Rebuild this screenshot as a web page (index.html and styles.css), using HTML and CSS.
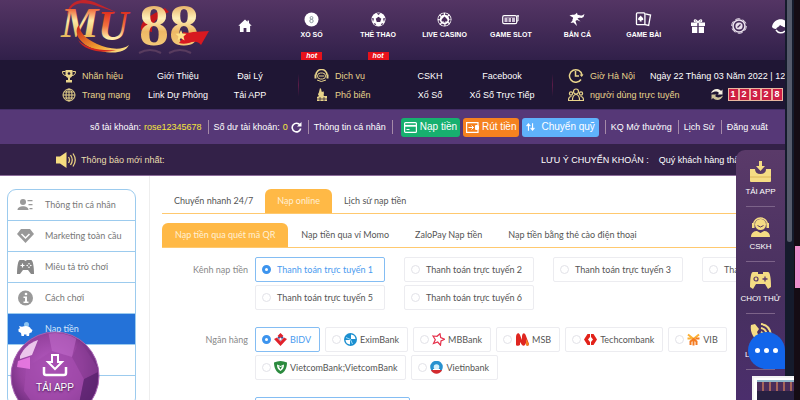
FILE: index.html
```html
<!DOCTYPE html>
<html lang="vi">
<head>
  <meta charset="UTF-8" />
  <meta name="viewport" content="width=device-width, initial-scale=1" />
  <title>MU88 - Nạp tiền</title>
  <link rel="stylesheet" href="styles.css">
</head>
<body>
  <div class="window">
    <div class="page">

      <header class="header">
        <a href="#" class="logo" aria-label="MU 88">
          <svg width="212" height="60" viewBox="0 0 212 60">
            <defs>
              <linearGradient id="goldM" x1="0" y1="0" x2="0" y2="1">
                <stop offset=".2" stop-color="#ef6a3c" />
                <stop offset=".45" stop-color="#fde9a4" />
                <stop offset=".8" stop-color="#e9b95c" />
              </linearGradient>
              <linearGradient id="goldU" x1="0" y1="0" x2="0" y2="1">
                <stop offset=".2" stop-color="#e0301f" />
                <stop offset=".5" stop-color="#f2733e" />
                <stop offset=".75" stop-color="#fdeaa6" />
              </linearGradient>
              <linearGradient id="gold88" x1="0" y1="0" x2="0" y2="1">
                <stop offset=".15" stop-color="#e0a050" />
                <stop offset=".4" stop-color="#fff0b8" />
                <stop offset=".6" stop-color="#eeb865" />
                <stop offset="1" stop-color="#f9d98a" />
              </linearGradient>
              <linearGradient id="swoosh" x1="0" y1="0" x2="1" y2="1">
                <stop offset="0" stop-color="#c81a1a" />
                <stop offset=".6" stop-color="#f0a030" />
                <stop offset="1" stop-color="#fff0a0" />
              </linearGradient>
            </defs>
            <path d="M67 15C68 1 82-3 94 2l24 11c-18-6-34-13-43-8-4 2-6 6-8 10z" fill="#c3242a" />
            <path d="M141 30c-1-11 11-15 24-22l4 4c-12 5-18 11-17 20z" fill="#c4151b" />
            <text x="61" y="37" class="logo-mu" fill="url(#goldM)">M</text>
            <text x="98" y="40" class="logo-mu" fill="url(#goldU)">U</text>
            <path d="M77 34c-1-4 0-7 2-9 1 8 7 14 18 19 12 5 24 7 32 1-4 8-16 9-28 6-13-3-22-9-24-17z" fill="url(#swoosh)" />
            <path d="M78 40c8 8 20 11 38 10-13 4-32 1-38-10z" fill="#d3271f" />
            <text x="139" y="45" class="logo-88" fill="url(#gold88)">88</text>
            <path d="M183 32c4 1 7 1 10 0l16-1-8 14c-3-4-7-4-12-2-4 1-7 1-10 0 3-3 5-7 4-11z" fill="#d71920" />
            <path d="M181 30l1.500 3.500 4 .3-3 2.600 1 4-3.500-2.200-3.500 2.200 1-4-3-2.600 4-.3z" fill="#ffe28a" />
            <path d="M139 53q11-6 22 0M169 53q11-6 22 0" fill="none" stroke="#7b5570" stroke-width="2" opacity=".5" />
          </svg>
        </a>

        <nav class="nav">
          <a href="#" class="nav-item home" aria-label="Trang chủ">
            <svg width="14" height="14" viewBox="0 0 14 14"><path d="M7 .5L.3 6.700h1.600V13h3.700V9h2.800v4h3.700V6.700h1.600L11 4V1.500H9.500v1.200z" fill="#fff" /></svg>
          </a>
          <a href="#" class="nav-item">
            <svg width="15" height="15" viewBox="0 0 15 15"><circle cx="7.500" cy="7.500" r="7" fill="#fff" /><g fill="none" stroke="#8d9aa0"><circle cx="7.500" cy="5.900" r="1.400" /><circle cx="7.500" cy="9" r="1.700" /></g></svg>
            XỔ SỐ
            <span class="hot">hot</span>
          </a>
          <a href="#" class="nav-item">
            <svg width="15" height="15" viewBox="0 0 15 15"><circle cx="7.500" cy="7.500" r="7" fill="#fff" /><g fill="#4a2d5a"><path d="M7.500 4.700l2.800 2-1.100 3.200H5.800L4.700 6.700z" /><path d="M5.500 1.300h4L7.500 3zM1 6l2 .5-1 3.500zM14 6l-2 .5 1 3.500zM4 11l1.500 2.500-3-1.500zM11 11l-1.500 2.500 3-1.500z" /></g></svg>
            THỂ THAO
            <span class="hot">hot</span>
          </a>
          <a href="#" class="nav-item">
            <svg width="15" height="15" viewBox="0 0 15 15"><circle cx="7.500" cy="7.500" r="7" fill="#fff" /><circle cx="7.500" cy="7.500" r="5.500" fill="none" stroke="#4a2d5a" stroke-width="1.500" stroke-dasharray="3 1.300" /><path d="M7.500 4.500c2 2 3 2.500 3 4 0 1.200-1.700 1.300-2.300.5l.3 1.500h-2l.3-1.500c-.6.8-2.300.7-2.300-.5 0-1.500 1-2 3-4z" fill="#4a2d5a" /></svg>
            LIVE CASINO
          </a>
          <a href="#" class="nav-item">
            <svg width="17" height="15" viewBox="0 0 17 15"><rect x=".7" y="3.700" width="14" height="8" rx="1.500" fill="none" stroke="#fff" stroke-width="1.200" /><rect x="2.500" y="5.500" width="10.500" height="4.500" fill="#cfc3d6" /><path d="M6 6v4M9.500 6v4" stroke="#4a2d5a" /><path d="M15 9h1V5" stroke="#fff" fill="none" /><circle cx="16" cy="4" r="1" fill="#fff" /></svg>
            GAME SLOT
          </a>
          <a href="#" class="nav-item">
            <svg width="16" height="15" viewBox="0 0 16 15"><path d="M.5 3.500C3 2.500 4 3 6 2.500L8 .7l.5 2c2 .2 3 1 4.500.8L15.500 2l-1 3-2 1c-2-.5-3-.5-4 .5l3 3-3.500-1.500-1.500 1 1.500 5-3.500-3.500-3 .5 2-2.500C3 7 4.500 6.700 4 5.500z" fill="#fff" /></svg>
            BẮN CÁ
          </a>
          <a href="#" class="nav-item">
            <svg width="17" height="15" viewBox="0 0 17 16"><path d="M10.500 2l5.500 1.300-2 11-5-1" fill="none" stroke="#fff" stroke-width="1.400" /><rect x="1" y="1" width="9" height="12.500" rx="1" fill="none" stroke="#fff" stroke-width="1.400" /><path d="M5.500 3.800c1.500 2 2.800 2.500 2.800 4 0 1-1.300 1.300-2 .6l.3 1.600H4.400l.3-1.600c-.7.700-2 .4-2-.6 0-1.500 1.300-2 2.800-4z" fill="#fff" /></svg>
            GAME BÀI
          </a>
        </nav>

        <div class="header-tools">
          <a href="#" aria-label="Khuyến mãi">
            <svg width="14" height="14" viewBox="0 0 14 14"><g fill="#fff"><path d="M0 3.500h6.300v3.500H0zM7.700 3.500H14v3.500H7.700zM1 7.700h5.300V14H1zM7.700 7.700H13V14H7.700z" /></g><path d="M7 3.300C5-.5 2.500.8 3.500 2.500L7 3.300l3.500-.8C11.500.8 9-.5 7 3.300z" fill="none" stroke="#fff" stroke-width="1.200" /></svg>
          </a>
          <a href="#" aria-label="VIP">
            <svg width="16" height="16" viewBox="0 0 16 16"><circle cx="8" cy="8" r="6" fill="none" stroke="#e9e0ec" stroke-width="1.600" /><circle cx="8" cy="8" r="7.300" fill="none" stroke="#e9e0ec" stroke-dasharray="5 2.600" /><circle cx="8" cy="8" r="3.600" fill="#e9e0ec" /><path d="M6.500 9.500l3-3" stroke="#4a2d5a" stroke-width="1.200" /></svg>
          </a>
          <a href="#" aria-label="Hỗ trợ">
            <svg width="16" height="16" viewBox="0 0 16 16"><path d="M0 8.500C2 0 12-1 15 5v4c-3 1-5-1-7-2-1 2-3 2-4 4-2 0-4-1-4-2.500z" fill="#fff" /><path d="M4 12c2 3 6 4 9 1" stroke="#fff" stroke-width="1.500" fill="none" /></svg>
          </a>
        </div>
      </header>

      <!-- Menu phụ -->
      <section class="submenu">
        <div class="group">
          <span class="gold">
            <svg width="14" height="14" viewBox="0 0 14 14"><path d="M3.500 1h7v4c0 2.500-1.500 4-3.500 4S3.500 7.500 3.500 5z" fill="#e8d48b" /><path d="M3.500 2.500h-3c0 2.500 1 4 3.700 4M10.500 2.500h3c0 2.500-1 4-3.700 4" fill="none" stroke="#e8d48b" /><path d="M6 8.500h2V11h2v2.500H4V11h2z" fill="#e8d48b" /><circle cx="7" cy="4.500" r="1.300" fill="#1f1634" /></svg>
            Nhãn hiệu
          </span>
          <a href="#">Giới Thiệu</a>
          <a href="#">Đại Lý</a>
          <span class="gold">
            <svg width="14" height="14" viewBox="0 0 14 14" fill="none" stroke="#e8d48b"><circle cx="7" cy="7" r="6" /><ellipse cx="7" cy="7" rx="3" ry="6" /><path d="M7 1v12M1 7h12M2 4h10M2 10h10" /></svg>
            Trang mạng
          </span>
          <a href="#">Link Dự Phòng</a>
          <a href="#">Tải APP</a>
        </div>
        <div class="group">
          <span class="gold">
            <svg width="15" height="14" viewBox="0 0 15 14" fill="none" stroke="#e8d48b"><path d="M2 6a5.500 5.500 0 0 1 11 0" stroke-width="1.500" /><rect x="3.500" y="4" width="8" height="6" rx="3" /><path d="M1.500 5.500v4M13.500 5.500v4" stroke-width="2" /><path d="M5 7h5M3 11q4 3 9 0" /></svg>
            Dịch vụ
          </span>
          <a href="#">CSKH</a>
          <a href="#">Facebook</a>
          <span class="gold">
            <svg width="15" height="14" viewBox="0 0 15 14"><path d="M6 0c2 1 1 3 2 4 1 0 1-1 1-1 2 2 0 4 1 5h3v5H3V9l2-1C3 6 5 5 5 4z" fill="#e8d48b" /><path d="M2 11h11M6 9v4M10 9v4" stroke="#1f1634" stroke-width=".7" /></svg>
            Phổ biến
          </span>
          <a href="#">Xổ Số</a>
          <a href="#">Xổ Số Trực Tiếp</a>
        </div>
        <div class="clock">
          <div class="clock-row">
            <span class="gold">
              <svg width="16" height="15" viewBox="0 0 16 15" fill="none" stroke="#e8d48b" stroke-width="1.500"><path d="M13 11.500A6.300 6.300 0 1 1 14 7" /><path d="M7.500 3v5h3.500" /><path d="M11.500 6.500h4L13.700 9z" fill="#e8d48b" stroke="none" /></svg>
              Giờ Hà Nội
            </span>
            <time>Ngày 22 Tháng 03 Năm 2022 | 12:</time>
          </div>
          <div class="clock-row">
            <span class="gold">
              <svg width="16" height="14" viewBox="0 0 16 14" fill="none" stroke="#e8d48b" stroke-width="1.200"><circle cx="8" cy="3.500" r="2.500" /><path d="M4.500 12.500c-.5-8 7.500-8 7 0z" /><circle cx="3" cy="5.500" r="1.600" /><circle cx="13" cy="5.500" r="1.600" /><path d="M4.500 12.500h-4c0-3 1-4 3-4M11.500 12.500h4c0-3-1-4-3-4" /></svg>
              người dùng trực tuyến
            </span>
            <span class="counter">
              <svg width="14" height="13" viewBox="0 0 14 13"><path d="M1 5.500C2 1 8-.5 11 3l1.500-1.500v5h-5L9 5C7 3 4.500 3 1 5.500z" fill="#f5f0e0" /><path d="M13 7.500c-1 4.500-7 6-10 2.500L1.500 11.500v-5h5L5 8c2 2 4.500 2 8-.5z" fill="#cfc49a" /></svg>
              <b>1</b><b>2</b><b>3</b><b>2</b><b>8</b>
            </span>
          </div>
        </div>
      </section>

      <!-- Thanh tài khoản -->
      <section class="account">
        <span>số tài khoản: <em>rose12345678</em></span>
        <span>Số dư tài khoản: <em>0</em>
          <svg class="reload" width="11" height="11" viewBox="0 0 11 11"><path d="M9 3A4.300 4.300 0 1 0 9.700 6.500" fill="none" stroke="#fff" stroke-width="1.600" /><path d="M10.500 0v4.500H6z" fill="#fff" /></svg>
        </span>
        <a href="#">Thông tin cá nhân</a>
        <div class="buttons">
          <button type="button" class="deposit">
            <svg width="13" height="11" viewBox="0 0 13 11"><rect x=".6" y=".6" width="11.800" height="9.800" rx="1" fill="none" stroke="#fff" stroke-width="1.200" /><path d="M0 3.800h13" stroke="#fff" stroke-width="1.800" /><path d="M2.500 7.500h3" stroke="#fff" /></svg>
            Nạp tiền
          </button>
          <button type="button" class="withdraw">
            <svg width="13" height="11" viewBox="0 0 13 11"><path d="M12 3V.6H.6v9.800H12V8" fill="none" stroke="#fff" stroke-width="1.200" /><rect x="9" y="3" width="4" height="5" rx="1" fill="#fff" /><path d="M2.500 5.500h5M5.500 3.500l2 2-2 2" fill="none" stroke="#fff" /></svg>
            Rút tiền
          </button>
          <button type="button" class="transfer">
            <svg width="9" height="10" viewBox="0 0 11 10"><path d="M3 9.500V2M.7 4L3 1.200 5.300 4M8 .5V8M5.700 6L8 8.800 10.300 6" fill="none" stroke="#fff" stroke-width="1.400" /></svg>
            Chuyển quỹ
          </button>
        </div>
        <a href="#">KQ Mở thưởng</a>
        <a href="#">Lịch Sử</a>
        <a href="#">Đăng xuất</a>
      </section>

      <section class="notice">
        <svg width="21" height="16" viewBox="0 0 21 16"><path d="M0 4.500h4L10.500 0v16L4 11.500H0z" fill="#f6dc80" /><path d="M12.500 5q2 3 0 6M14.500 3q3.500 5 0 10M17 1.500q4.500 6.500 0 13" fill="none" stroke="#e8cf80" stroke-width="1.300" /></svg>
        <strong>Thông báo mới nhất:</strong>
        <p class="marquee"><span>LƯU Ý CHUYỂN KHOẢN :</span><span>Quý khách hàng thân mến</span></p>
      </section>

      <div class="body">
        <aside class="sidebar">
          <ul class="menu">
            <li><a href="#">
              <svg width="16" height="16" viewBox="0 0 16 16" fill="#999"><circle cx="5.500" cy="5" r="3" /><path d="M0 13c0-5 11-5 11 0z" /><path d="M10 3h5v1.200h-5zM11 7h4v1.200h-4zM12 11h3v1.200h-3z" /></svg>
              Thông tin cá nhân</a></li>
            <li><a href="#">
              <svg width="17" height="16" viewBox="0 0 17 16"><path d="M4 1h9l4 5-8.500 9L0 6z" fill="#999" /><path d="M4.500 6l4 4 4-4" fill="none" stroke="#fff" stroke-width="1.500" /></svg>
              Marketing toàn cầu</a></li>
            <li><a href="#">
              <svg width="17" height="16" viewBox="0 0 17 16"><path d="M3 1h4l1.500 1L10 1h4c2 0 3 7 3 14h-3l-3-4H6l-3 4H0C0 8 1 1 3 1z" fill="#888" /><path d="M3.500 6.500h4M5.500 4.500v4" stroke="#fff" stroke-width="1.200" /><g fill="#fff"><circle cx="12" cy="4.700" r=".8" /><circle cx="12" cy="8.300" r=".8" /><circle cx="10.200" cy="6.500" r=".8" /><circle cx="13.800" cy="6.500" r=".8" /></g></svg>
              Miêu tả trò chơi</a></li>
            <li><a href="#">
              <svg width="16" height="16" viewBox="0 0 16 16"><circle cx="8" cy="8" r="7.500" fill="#999" /><g fill="#fff"><circle cx="8.500" cy="4" r="1.300" /><path d="M6 6.500h3.500v5H11V13H6v-1.500h1.500V8H6z" /></g></svg>
              Cách chơi</a></li>
            <li><a href="#" class="active">
              <svg width="16" height="16" viewBox="0 0 16 16"><circle cx="9" cy="3.500" r="2.500" fill="#8ec5f2" /><path d="M1.500 5l3 .8C8 4 12.500 5 13.500 8l1.500 1-1 2.500-2 .5-.5 3H9v-1.500H6.500V15H4l-.5-3L1 10.500V8l1.500-.7z" fill="#fff" /></svg>
              Nạp tiền</a></li>
            <li><a href="#" aria-label="Rút tiền"></a></li>
            <li><a href="#" aria-label="Lịch sử"></a></li>
          </ul>
        </aside>

        <main class="content">
          <nav class="tabs">
            <a href="#">Chuyển nhanh 24/7</a>
            <a href="#" class="active">Nạp online</a>
            <a href="#">Lịch sử nạp tiền</a>
          </nav>
          <nav class="tabs methods">
            <a href="#" class="active">Nạp tiền qua quét mã QR</a>
            <a href="#">Nạp tiền qua ví Momo</a>
            <a href="#">ZaloPay Nạp tiền</a>
            <a href="#">Nạp tiền bằng thẻ cào điện thoại</a>
          </nav>

          <form>
            <div class="field" role="radiogroup" aria-labelledby="channelLabel">
              <span class="field-label" id="channelLabel">Kênh nạp tiền</span>
              <div class="channels">
                <label class="option"><input type="radio" name="channel" checked>Thanh toán trực tuyến 1</label>
                <label class="option"><input type="radio" name="channel">Thanh toán trực tuyến 2</label>
                <label class="option"><input type="radio" name="channel">Thanh toán trực tuyến 3</label>
                <label class="option"><input type="radio" name="channel">Thanh toán trực tuyến 4</label>
                <label class="option"><input type="radio" name="channel">Thanh toán trực tuyến 5</label>
                <label class="option"><input type="radio" name="channel">Thanh toán trực tuyến 6</label>
              </div>
            </div>

            <div class="field" role="radiogroup" aria-labelledby="bankLabel">
              <span class="field-label" id="bankLabel">Ngân hàng</span>
              <div class="banks">
                <label class="option"><input type="radio" name="bank" checked>
                  <svg width="13" height="13" viewBox="0 0 13 13"><path d="M6.500 1l3 3.500-3 3.500-3-3.500z" fill="#35569f" /><path d="M6.500 0l3 3-3 2-3-2zM0 6l3-1.500 3.500 4L10 4.500 13 6 6.500 13z" fill="#e0222b" /><path d="M6.500 4.500l1.500 1.500-1.500 1.500L5 6z" fill="#fff" /></svg>
                  BIDV</label>
                <label class="option"><input type="radio" name="bank">
                  <svg width="13" height="13" viewBox="0 0 13 13"><circle cx="6.500" cy="6.500" r="6.500" fill="#1b8fd0" /><path d="M7 6V1.500A5 5 0 0 1 11.500 6zM6 7v4.500A5 5 0 0 1 1.500 7z" fill="#fff" /><path d="M2 4.500L6.500 6.500l2 4.500" stroke="#9fdcf7" fill="none" /></svg>
                  EximBank</label>
                <label class="option"><input type="radio" name="bank">
                  <svg width="13" height="13" viewBox="0 0 13 13"><path d="M1 3l4 .3L8 .7l.7 3.800 3.800 1.800-3.500 1.600-.5 4.300L5.700 9 1.500 10.500 3.300 6.700z" fill="none" stroke="#e5304a" stroke-width="1.200" /></svg>
                  MBBank</label>
                <label class="option"><input type="radio" name="bank">
                  <svg width="14" height="13" viewBox="0 0 14 13"><path d="M1 4c0-4 3-5 4-2l2 5V3c1-4 3-3 4 0l3 8c0 2-2 2-3 1l-1-2v2c-1 1-2 1-3 0L5 9v3c-1 1-4 1-4 0z" fill="#df2620" /><path d="M11 6l3 5c0 2-2 2-3 1z" fill="#f58220" /></svg>
                  MSB</label>
                <label class="option"><input type="radio" name="bank">
                  <svg width="13" height="13" viewBox="0 0 13 13"><path d="M3.500 1H6v3L4 6.500 6 9v3H3.500L0 6.500zM9.500 1H7v3l2 2.500L7 9v3h2.500L13 6.500z" fill="#e2231a" /></svg>
                  Techcombank</label>
                <label class="option"><input type="radio" name="bank">
                  <svg width="13" height="13" viewBox="0 0 13 13" fill="none" stroke-width="2"><path d="M1 1.500L6.500 6 12 1.500M.5 5.500h4" stroke="#fbb034" /><path d="M8.500 5.500h4M6.500 6v6.500M3.500 12V8.500L6.500 6l3 2.500V12" stroke="#f47b20" /></svg>
                  VIB</label>
                <label class="option"><input type="radio" name="bank">
                  <svg width="13" height="13" viewBox="0 0 13 13"><path d="M0 1.500q6.500-3 13 0C13 7 11 11 6.500 13 2 11 0 7 0 1.500z" fill="#2b8a3e" /><path d="M3 3.500l3.500 1.500L10 3.500C10 7 9 8.500 6.500 10 4 8.500 3 7 3 3.500z" fill="#fff" /><path d="M4.500 5L6.500 6l2-1-2 3.500z" fill="#2b8a3e" /></svg>
                  VietcomBank;VietcomBank</label>
                <label class="option"><input type="radio" name="bank">
                  <svg width="13" height="13" viewBox="0 0 13 13"><path d="M2 10.500A6.300 6.300 0 1 1 11 10.500L9 8H4z" fill="#2791cf" /><circle cx="6.500" cy="6" r="2.800" fill="#d5f0fb" /><path d="M1 9h11c-2 5-9 5-11 0z" fill="#d32b2f" /><path d="M3 8.500h7" stroke="#fff" /></svg>
                  Vietinbank</label>
              </div>
            </div>

            <div class="field">
              <span class="field-label"></span>
              <input type="text" class="amount" aria-label="Số tiền nạp">
            </div>
          </form>
        </main>
      </div>

      <!-- Cột hỗ trợ nổi bên phải -->
      <aside class="dock">
        <a href="#">
          <svg width="21" height="21" viewBox="0 0 21 21"><path d="M0 8h5q0 5 5.500 5T16 8h5v12q0 1-1 1H1q-1 0-1-1z" fill="#f5dc84" /><path d="M9 0h3v5h3l-4.500 5L6 5h3z" fill="#f5dc84" /><path d="M0 16h21" stroke="#dcb65a" /></svg>
          TẢI APP</a>
        <a href="#">
          <svg width="21" height="21" viewBox="0 0 21 21"><circle cx="10.500" cy="8.500" r="5.500" fill="#f5dc84" /><path d="M3.500 9a7 7 0 0 1 14 0" fill="none" stroke="#f5dc84" stroke-width="1.500" /><path d="M2 7h2.500v5H2zM16.500 7H19v5h-2.500zM1 21c0-5 4-6 6-6l3.500 2 3.500-2c2 0 6 1 6 6z" fill="#f5dc84" /><path d="M7.500 9.500q3 3 6 0" stroke="#5b3a69" fill="none" /></svg>
          CSKH</a>
        <a href="#">
          <svg width="21" height="18" viewBox="0 0 21 18"><path d="M3 1h5v2h5V1h5c2 0 3 6 3 15l-3 2-3-5H6l-3 5-3-2C0 7 1 1 3 1z" fill="#f5dc84" /><circle cx="6" cy="8" r="2" fill="none" stroke="#5b3a69" stroke-width="1.200" /><path d="M12.500 8h5M15 5.500v5" stroke="#5b3a69" stroke-width="1.300" /></svg>
          CHƠI THỬ</a>
        <a href="#">
          <svg width="22" height="22" viewBox="0 0 22 22"><path d="M1 2l4-1 4 5-2 3c1 3 3 6 6 7l3-2 5 4-3 4C9 22-1 13 1 2z" fill="#f5dc84" /><path d="M11 1q9 1 10 11M11 5q5 1 6 7M11 9q2 1 2 3" fill="none" stroke="#f5dc84" stroke-width="2" /></svg>
          LIÊN HỆ</a>
      </aside>

      <a href="#" class="ball">
        <svg class="ball-bg" viewBox="0 0 90 90">
          <defs>
            <radialGradient id="orb" cx=".45" cy=".4" r=".6">
              <stop offset="0" stop-color="#b85cc4" />
              <stop offset=".6" stop-color="#96429f" />
              <stop offset="1" stop-color="#5f2470" />
            </radialGradient>
            <clipPath id="orbClip"><circle cx="45" cy="45" r="43" /></clipPath>
          </defs>
          <circle cx="45" cy="45" r="44" fill="url(#orb)" stroke="#a864b4" />
          <g clip-path="url(#orbClip)">
            <path d="M16 37L42 20l20 6 12 22-6 30-40 2L14 60z" fill="#a24bac" opacity=".7" />
            <path d="M42 20L38 0h30l-6 26z" fill="#c06aca" opacity=".6" />
            <path d="M74 48l16-8v40l-22-2z" fill="#5c2470" opacity=".8" />
            <path d="M62 26l8-16 20 30-16 8z" fill="#8a3d96" opacity=".6" />
            <path d="M10 25C14 17 19 12 28 9l-6 15-12 4z" fill="#f9dcf8" opacity=".85" />
            <path d="M8 30l12-4v12L7 36z" fill="#f07ee8" opacity=".85" />
          </g>
        </svg>
        <svg class="ball-icon" width="26" height="24" viewBox="0 0 26 24"><path d="M10 2h6v7h4l-7 7-7-7h4z" fill="none" stroke="#fff" stroke-width="2" /><path d="M2 14v6q0 2 2 2h18q2 0 2-2v-6" fill="none" stroke="#fff" stroke-width="2.500" /></svg>
        <span>TẢI APP</span>
      </a>

      <button type="button" class="chat" aria-label="Chat"><i></i><i></i><i></i></button>
    </div>

    <div class="scrollbar"><div class="thumb"></div></div>
    <div class="edge"><div class="edge-tab"></div></div>

    <div class="preview">
      <div class="preview-top"></div>
      <div class="preview-bar"></div>
    </div>
  </div>
</body>
</html>
```
FILE: styles.css
```css
* {
  box-sizing: border-box;
}

body {
  margin: 0;
  background: #fff;
  font-family: "Liberation Sans", Arial, sans-serif;
  font-size: 10px;
  line-height: 12px;
  color: #fff;
}

a {
  color: inherit;
  text-decoration: none;
}

svg {
  flex: none;
  display: block;
}

.window {
  position: relative;
  display: flex;
  height: 100vh;
  overflow: hidden;
}

.page {
  position: relative;
  flex: 1;
  min-width: 0;
  overflow: hidden;
  white-space: nowrap;
}

/* header */
.header {
  display: grid;
  grid-template-columns: 212px 1fr 108px;
  height: 60px;
  background: linear-gradient(#543564, #31204a);
}

.logo-mu {
  font: italic bold 42px "Liberation Serif", serif;
}

.logo-88 {
  font: bold 60px "Liberation Serif", serif;
}

.nav {
  display: grid;
  grid-template-columns: repeat(7, 1fr);
}

.nav-item {
  display: flex;
  flex-direction: column;
  align-items: center;
  padding-top: 12px;
  gap: 2px;
  font-size: 7px;
  font-weight: bold;
}

.nav-item.home {
  padding-top: 19px;
}

.hot {
  margin-top: auto;
  padding: 0 5px;
  background: #e8121b;
  font-size: 7px;
  line-height: 8px;
  font-style: italic;
}

.header-tools {
  display: grid;
  grid-template-columns: repeat(3, 41px);
  align-items: center;
  justify-items: center;
  padding-bottom: 8px;
}

/* submenu */
.submenu {
  display: grid;
  grid-template-columns: 237px 254px 1fr;
  height: 49px;
  padding: 6px 0 5px 62px;
  background: #1f1634;
  font-size: 9px;
}

.group {
  display: grid;
  grid-template-columns: 80px 72px 72px;
  grid-auto-rows: 19px;
  align-items: center;
  background: linear-gradient(transparent 20%, #5c1c48, transparent 80%) right / 1px 100% no-repeat;
  text-align: center;
}

.group + .group,
.clock {
  padding-left: 15px;
}

.gold {
  display: flex;
  align-items: center;
  gap: 6px;
  color: #e8d48b;
}

.clock-row {
  display: flex;
  align-items: center;
  height: 19px;
  gap: 15px;
}

.counter {
  display: flex;
  align-items: center;
  margin-left: 15px;
}

.counter svg {
  margin-right: 4px;
}

.counter b {
  width: 11px;
  border: 1px solid #e8b7a0;
  background: #cf1f45;
  line-height: 11px;
  text-align: center;
}

/* account bar */
.account {
  display: flex;
  align-items: center;
  height: 35px;
  padding-left: 90px;
  background: #563877;
  border-top: 1px solid #432e66;
  font-size: 9px;
}

.account > span,
.account > a {
  display: flex;
  align-items: center;
  gap: 3px;
  height: 14px;
  padding-right: 6px;
}

.account > * + * {
  border-left: 1px solid #a58aa8;
  padding-left: 5px;
}

.account em {
  font-style: normal;
  color: #f5e63b;
}

.account > .buttons {
  display: flex;
  align-items: center;
  gap: 3px;
  height: 14px;
  padding: 0 6px 0 8px;
}

.buttons button {
  display: flex;
  flex: none;
  align-items: center;
  gap: 3px;
  height: 19px;
  padding: 0 3px;
  border: 0;
  border-radius: 3px;
  color: #fff;
  font: 10px/12px "Liberation Sans", Arial, sans-serif;
}

.buttons .deposit {
  background: #17b06f;
}

.buttons .withdraw {
  background: #f5821f;
}

.buttons .transfer {
  gap: 6px;
  padding: 0 4px;
  background: #5fb2fb;
}

/* notice */
.notice {
  display: flex;
  align-items: center;
  gap: 4px;
  height: 32px;
  padding-left: 56px;
  background: #332148;
  border-bottom: 1px solid #8c6c9a;
}

.notice strong {
  color: #eadfae;
  font-size: 9px;
  font-weight: normal;
}

.marquee {
  display: flex;
  gap: 10px;
  width: 244px;
  margin: 0 0 0 auto;
  font-size: 9px;
}

/* body */
.body {
  display: grid;
  grid-template-columns: 150px 1fr;
  height: calc(100vh - 176px);
  overflow: hidden;
  background: #fff;
  color: #555;
  font-family: Lato, "Open Sans", sans-serif;
  font-size: 9px;
}

.sidebar {
  padding: 13px 13px 0 7px;
  border-right: 1px solid #eee;
}

.menu {
  margin: 0;
  padding: 0;
  overflow: hidden;
  list-style: none;
  border: 1px solid #9ccbee;
  border-radius: 9px;
}

.menu li + li {
  border-top: 1px solid #9ccbee;
}

.menu a {
  display: flex;
  align-items: center;
  gap: 11px;
  height: 30px;
  padding-left: 9px;
  color: #777;
}

.menu svg {
  width: 17px;
}

.menu a.active {
  background: #2472d8;
  color: #d3e6fb;
}

.content {
  min-width: 0;
  padding: 13px 0 0 12px;
}

.tabs {
  display: flex;
  height: 25px;
  margin-bottom: 9px;
  border-bottom: 1px solid #ffc96f;
}

.tabs a {
  padding: 6px 12px;
  border-radius: 6px 6px 0 0;
}

.tabs.methods a {
  padding: 6px 13px;
}

.tabs a.active {
  background: #ffb946;
  color: #fff0d5;
}

.field {
  display: grid;
  grid-template-columns: 86px 1fr;
  gap: 7px;
  margin-bottom: 17px;
}

.field-label {
  padding-top: 7px;
  color: #888;
  text-align: right;
}

.channels {
  display: grid;
  grid-template-columns: repeat(4, 130px);
  gap: 3px 19px;
}

.banks {
  display: flex;
  flex-wrap: wrap;
  gap: 3px 5px;
  padding-right: 20px;
}

.option {
  display: flex;
  align-items: center;
  gap: 3px;
  height: 25px;
  padding: 0 8px 0 6px;
  border: 1px solid #ececf0;
  border-radius: 2px;
}

.option input {
  flex: none;
  appearance: none;
  width: 9px;
  height: 9px;
  margin: 0;
  border: 1px solid #e2e2e8;
  border-radius: 50%;
}

.channels .option input {
  margin-right: 3px;
}

.option input:checked {
  border: 3px solid #3d94ee;
}

.option:has(input:checked) {
  border-color: #84bdf3;
  color: #4a9bef;
}

.amount {
  width: 155px;
  height: 25px;
  border: 1px solid #84bdf3;
  border-radius: 2px;
}

/* floating items */
.dock {
  position: absolute;
  top: 150px;
  right: 0;
  bottom: 0;
  display: flex;
  flex-direction: column;
  width: 49px;
  padding: 2px 10px 0;
  border-radius: 9px 0 0 0;
  background: linear-gradient(#5a3a69, #47305f 60%, #4b2e6c);
  font-size: 8px;
}

.dock a {
  display: flex;
  flex-direction: column;
  align-items: center;
  gap: 4px;
  padding: 9px 0 8px;
  border-bottom: 1px solid #7c6389;
}

.ball {
  position: absolute;
  top: 331px;
  left: 10px;
  display: flex;
  flex-direction: column;
  align-items: center;
  gap: 5px;
  width: 90px;
  height: 90px;
  padding-top: 22px;
  font-size: 10px;
  text-shadow: 0 1px 2px #3c1248;
}

.ball-bg {
  position: absolute;
  inset: 0;
}

.ball-icon,
.ball span {
  position: relative;
}

.chat {
  position: absolute;
  top: 332px;
  right: 0;
  display: flex;
  align-items: center;
  justify-content: center;
  gap: 4px;
  width: 37px;
  height: 37px;
  padding: 0;
  border: 0;
  border-radius: 50% 50% 0 50%;
  background: #1265ea;
}

.chat i {
  width: 5px;
  height: 5px;
  border-radius: 50%;
  background: #fff;
}

.scrollbar {
  width: 9px;
  padding: 0 2px;
  background: #151b2c;
}

.thumb {
  height: 242px;
  border-radius: 0 0 3px 3px;
  background: #555a6b;
}

.edge {
  width: 6px;
  padding: 246px 0 0 1px;
  background: #150c14;
}

.edge-tab {
  height: 42px;
  background: #ee8fcb;
}

.preview {
  position: absolute;
  right: 6px;
  bottom: 0;
  width: 42px;
  height: 24px;
  padding: 2px 0 0 3px;
  border: 2px solid #f3f3f3;
  border-width: 2px 0 0 2px;
  background: #fff;
}

.preview-top {
  height: 11px;
  border-top: 2px solid #8fb6c9;
  background: repeating-linear-gradient(90deg, #4a2d5a 0 5px, #a5645a 5px 7px);
}

.preview-bar {
  height: 12px;
  background: #272040;
}
```
